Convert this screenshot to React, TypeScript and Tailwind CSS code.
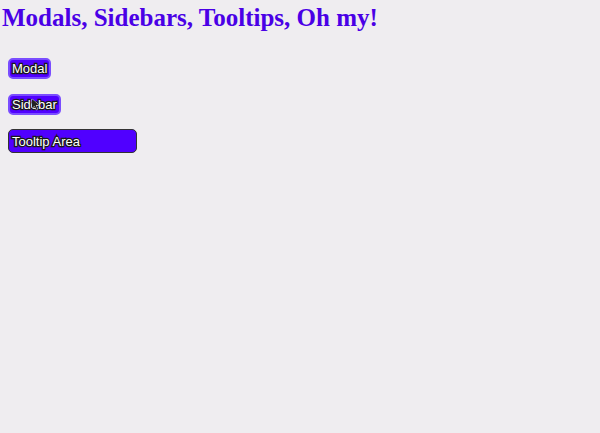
import React from "react";

export default function App() {
  const btn =
    "block bg-[#5000ff] text-white rounded-[5px] text-[13px] leading-[15px] text-left [font-family:'Liberation_Sans',Arial,sans-serif] [-webkit-text-stroke:2.5px_#1a1a1a] [paint-order:stroke_fill]";
  return (
    <div className="w-[600px] h-[433px] bg-[#efedf0] overflow-hidden">
      <h1 className="m-0 pl-[2px] pt-[3px] text-[25px] leading-[30px] font-bold text-[#4a00e6] [font-family:'Liberation_Serif','Times_New_Roman',serif]">
        Modals, Sidebars, Tooltips, Oh my!
      </h1>
      <div className="flex flex-col items-start pl-[8px] pt-[25px]">
        <button className={btn + " border-2 border-[#7a4dff] px-[2px] py-[1px]"}>Modal</button>
        <button className={btn + " relative mt-[15px] border-2 border-[#7a4dff] px-[2px] py-[1px]"}>
          Sidebar
          <svg className="absolute left-[21px] top-[2px]" width="9" height="13" viewBox="0 0 9 13">
            <path d="M1 1 L1 10 L3.5 7.8 L5.3 11.8 L6.6 11.2 L4.8 7.3 L8 7.1 Z" fill="#222" stroke="#fff" strokeWidth="0.8" />
          </svg>
        </button>
        <button className={btn + " mt-[14px] w-[129px] h-[24px] border border-[#333] px-[3px] py-[3px]"}>Tooltip Area</button>
      </div>
    </div>
  );
}
